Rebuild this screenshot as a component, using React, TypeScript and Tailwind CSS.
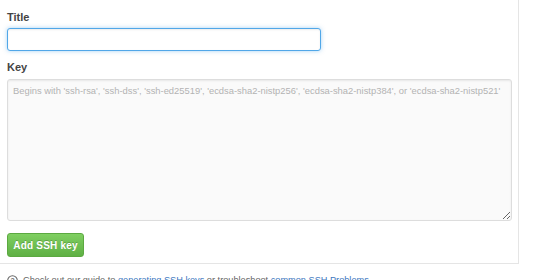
import React from "react";

export default function App() {
  return (
    <div className="w-[554px] h-[280px] overflow-hidden bg-white" style={{ fontFamily: '"Liberation Sans", Arial, sans-serif' }}>
      <div className="w-[519px] border-r border-[#e5e5e5]">
        <div className="pl-[7px] pr-[7px] pt-[10px] pb-[6px] border-b border-[#e5e5e5]">
          <label className="block text-[11px] font-bold text-[#444] leading-[15px]">Title</label>
          <input
            type="text"
            className="mt-[3px] block w-[314px] h-[23px] rounded-[3px] border border-[#51a7e8] bg-white outline-none shadow-[inset_0_1px_2px_rgba(0,0,0,0.075),0_0_4px_rgba(81,167,232,0.5)]"
          />
          <label className="block mt-[9px] text-[11px] font-bold text-[#444] leading-[15px]">Key</label>
          <textarea
            placeholder="Begins with 'ssh-rsa', 'ssh-dss', 'ssh-ed25519', 'ecdsa-sha2-nistp256', 'ecdsa-sha2-nistp384', or 'ecdsa-sha2-nistp521'"
            className="mt-[4px] block w-[505px] h-[142px] rounded-[3px] border border-[#ddd] bg-[#fafafa] px-[5px] py-[4px] text-[9.4px] leading-[14px] text-[#333] placeholder:text-[#b3b3b3] outline-none shadow-[inset_0_1px_2px_rgba(0,0,0,0.075)]"
          />
          <button className="mt-[12px] h-[24px] w-[77px] rounded-[3px] border border-[#5ca941] bg-gradient-to-b from-[#7fcf61] to-[#5fb044] text-white text-[10px] font-bold tracking-[0.2px] [text-shadow:0_-1px_0_rgba(0,0,0,0.2)]">
            Add SSH key
          </button>
        </div>
      </div>
      <div className="flex items-center gap-[5px] pl-[7px] pt-[10px] text-[9.2px] leading-[12px] text-[#666]">
        <svg width="11" height="11" viewBox="0 0 16 16" className="text-[#666] shrink-0">
          <circle cx="8" cy="8" r="7" fill="none" stroke="currentColor" strokeWidth="1.5" />
          <text x="8" y="12" textAnchor="middle" fontSize="10" fontWeight="bold" fill="currentColor">?</text>
        </svg>
        <span>
          Check out our guide to <a className="text-[#4078c0]">generating SSH keys</a> or troubleshoot{" "}
          <a className="text-[#4078c0]">common SSH Problems</a>.
        </span>
      </div>
    </div>
  );
}
